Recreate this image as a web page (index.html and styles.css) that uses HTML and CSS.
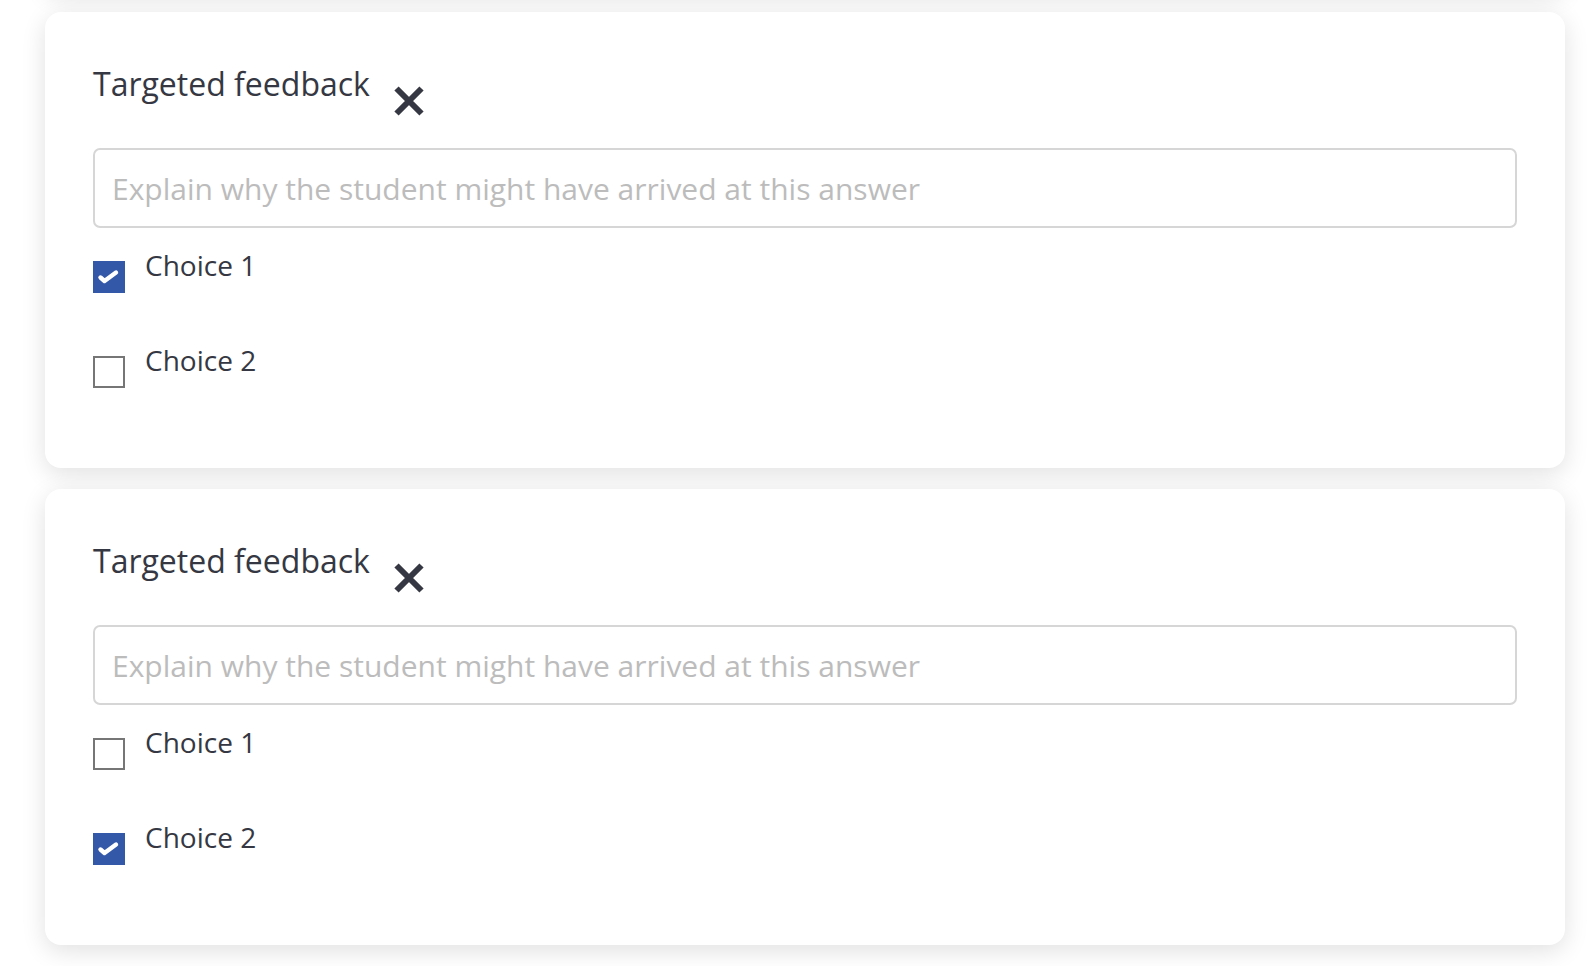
FILE: index.html
```html
<!DOCTYPE html>
<html lang="en">
<head>
<meta charset="utf-8">
<title>Targeted feedback</title>
<link rel="stylesheet" href="styles.css">
</head>
<body>
<div class="list">
  <div class="card card-prev"></div>

  <section class="card">
    <div class="title-row">
      <h2 class="title">Targeted feedback</h2>
      <button class="close" aria-label="Remove">
        <svg viewBox="0 0 32 32" width="32" height="32"><path d="M3.5 3.5 L28.5 28.5 M28.5 3.5 L3.5 28.5" stroke="#353842" stroke-width="6" fill="none"/></svg>
      </button>
    </div>
    <input class="field" type="text" placeholder="Explain why the student might have arrived at this answer">
    <div class="choices">
      <label class="choice">
        <span class="box checked"><svg viewBox="0 0 32 32" width="32" height="32"><path d="M7.5 16.5 L11.5 20 L23 11.5" stroke="#fff" stroke-width="4.4" fill="none" stroke-linecap="round" stroke-linejoin="round"/></svg></span>
        <span class="choice-text">Choice 1</span>
      </label>
      <label class="choice">
        <span class="box"></span>
        <span class="choice-text">Choice 2</span>
      </label>
    </div>
  </section>

  <section class="card">
    <div class="title-row">
      <h2 class="title">Targeted feedback</h2>
      <button class="close" aria-label="Remove">
        <svg viewBox="0 0 32 32" width="32" height="32"><path d="M3.5 3.5 L28.5 28.5 M28.5 3.5 L3.5 28.5" stroke="#353842" stroke-width="6" fill="none"/></svg>
      </button>
    </div>
    <input class="field" type="text" placeholder="Explain why the student might have arrived at this answer">
    <div class="choices">
      <label class="choice">
        <span class="box"></span>
        <span class="choice-text">Choice 1</span>
      </label>
      <label class="choice">
        <span class="box checked"><svg viewBox="0 0 32 32" width="32" height="32"><path d="M7.5 16.5 L11.5 20 L23 11.5" stroke="#fff" stroke-width="4.4" fill="none" stroke-linecap="round" stroke-linejoin="round"/></svg></span>
        <span class="choice-text">Choice 2</span>
      </label>
    </div>
  </section>
</div>
</body>
</html>
```

FILE: styles.css
```css
* { box-sizing: border-box; }

html, body {
  margin: 0;
  padding: 0;
  background: #ffffff;
  overflow: hidden;
}

body {
  font-family: "Open Sans", "Noto Sans", sans-serif;
  color: #353842;
  width: 1592px;
  height: 966px;
}

.list {
  display: flex;
  flex-direction: column;
  gap: 21px;
  padding: 0 27px 0 45px;
  margin-top: -200px;
}

.card {
  background: #ffffff;
  border-radius: 16px;
  box-shadow: 0 6px 24px rgba(0, 0, 0, 0.12);
  padding: 48px 48px 80px 48px;
  width: 1520px;
}

.card-prev {
  height: 191px;
  padding: 0;
}

.title-row {
  display: flex;
  align-items: flex-start;
  height: 56px;
}

.title {
  margin: 2px 0 0 0;
  font-size: 32px;
  line-height: 44px;
  font-weight: 400;
  color: #353842;
}

.close {
  margin: 25px 0 0 23px;
  padding: 0;
  border: 0;
  background: transparent;
  width: 32px;
  height: 32px;
  display: block;
  cursor: pointer;
}

.close svg { display: block; }

.field {
  display: block;
  margin-top: 32px;
  width: 100%;
  height: 80px;
  border: 2px solid #d6d6d6;
  border-radius: 7px;
  padding: 0 17px;
  font-family: "Open Sans", "Noto Sans", sans-serif;
  font-size: 30px;
  color: #353842;
  background: #fff;
  outline: none;
}

.field::placeholder {
  color: #bcbcbc;
}

.choices {
  display: flex;
  flex-direction: column;
  gap: 48px;
  margin-top: 18px;
}

.choice {
  display: flex;
  align-items: flex-start;
  gap: 20px;
  cursor: pointer;
}

.box {
  width: 32px;
  height: 32px;
  margin-top: 15px;
  border: 2px solid #767676;
  background: #fff;
  flex: 0 0 auto;
  display: block;
}

.box.checked {
  border: 0;
  background: #3458a8;
}

.box svg { display: block; }

.choice-text {
  font-size: 28px;
  line-height: 40px;
  margin-top: -1px;
  color: #353842;
}
```
